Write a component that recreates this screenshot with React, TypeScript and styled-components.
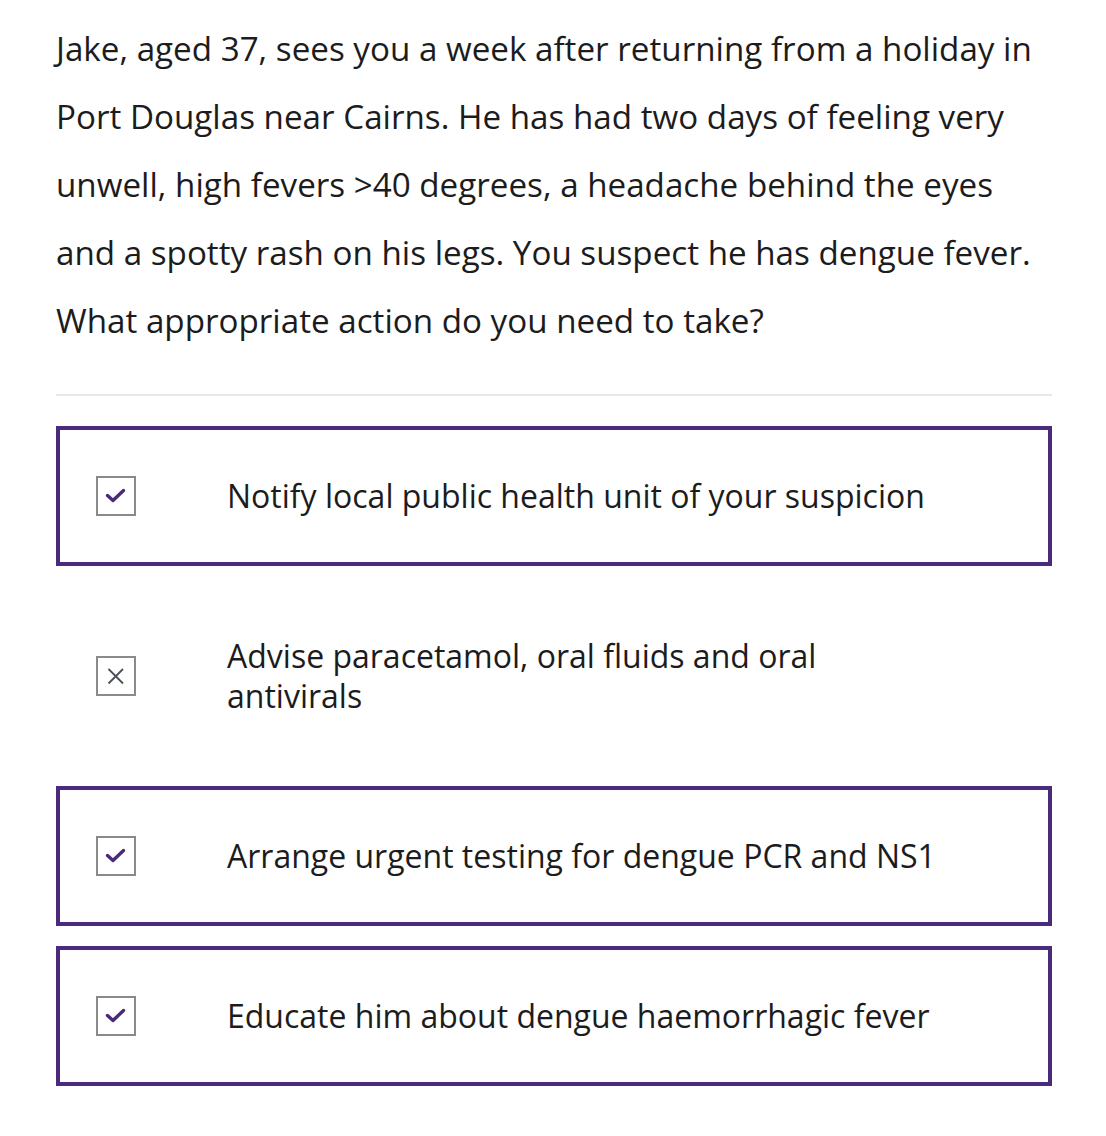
import React from "react";
import styled, { createGlobalStyle } from "styled-components";

const Global = createGlobalStyle`
  body { margin: 0; background: #fff; font-family: "Open Sans", "Noto Sans", sans-serif; color: #1c1c1c; }
`;

const Page = styled.div`
  padding: 15px 54px 40px 56px;
  width: 996px;
`;

const Question = styled.p`
  margin: 0;
  font-size: 33.2px;
  line-height: 68px;
  color: #1c1c1c;
`;

const Divider = styled.hr`
  border: none;
  height: 2px;
  background: #e8e8e8;
  margin: 39px 0 30px;
`;

const Options = styled.div`
  display: flex;
  flex-direction: column;
  gap: 20px;
`;

const Option = styled.div<{ $selected: boolean }>`
  display: flex;
  align-items: center;
  box-sizing: border-box;
  padding: 46px 36px;
  border: 4px solid ${(p) => (p.$selected ? "#4b2a7b" : "transparent")};
`;

const Box = styled.div`
  width: 40px;
  height: 40px;
  box-sizing: border-box;
  border: 2px solid #8a8a8a;
  display: flex;
  flex-shrink: 0;
  svg { display: block; }
`;

const Label = styled.div`
  margin-left: 91px;
  font-size: 32px;
  line-height: 40px;
  color: #1c1c1c;
  max-width: 720px;
`;

const Check = () => (
  <svg width="36" height="36" viewBox="0 0 36 36">
    <path d="M9.5 17.5 L15 22.5 L25.5 12.5" fill="none" stroke="#4b2a7b" strokeWidth="3.4" strokeLinecap="round" strokeLinejoin="round" />
  </svg>
);

const Cross = () => (
  <svg width="36" height="36" viewBox="0 0 36 36">
    <path d="M10.5 11 L25 25.5 M25 11 L10.5 25.5" fill="none" stroke="#4a5058" strokeWidth="1.8" />
  </svg>
);

const options = [
  { text: "Notify local public health unit of your suspicion", selected: true },
  { text: "Advise paracetamol, oral fluids and oral antivirals", selected: false },
  { text: "Arrange urgent testing for dengue PCR and NS1", selected: true },
  { text: "Educate him about dengue haemorrhagic fever", selected: true },
];

export default function App() {
  return (
    <Page>
      <Global />
      <Question>
        Jake, aged 37, sees you a week after returning from a holiday in Port Douglas near Cairns. He has had two days of
        feeling very unwell, high fevers &gt;40 degrees, a headache behind the eyes and a spotty rash on his legs. You
        suspect he has dengue fever. What appropriate action do you need to take?
      </Question>
      <Divider />
      <Options>
        {options.map((o) => (
          <Option key={o.text} $selected={o.selected}>
            <Box>{o.selected ? <Check /> : <Cross />}</Box>
            <Label>{o.text}</Label>
          </Option>
        ))}
      </Options>
    </Page>
  );
}
